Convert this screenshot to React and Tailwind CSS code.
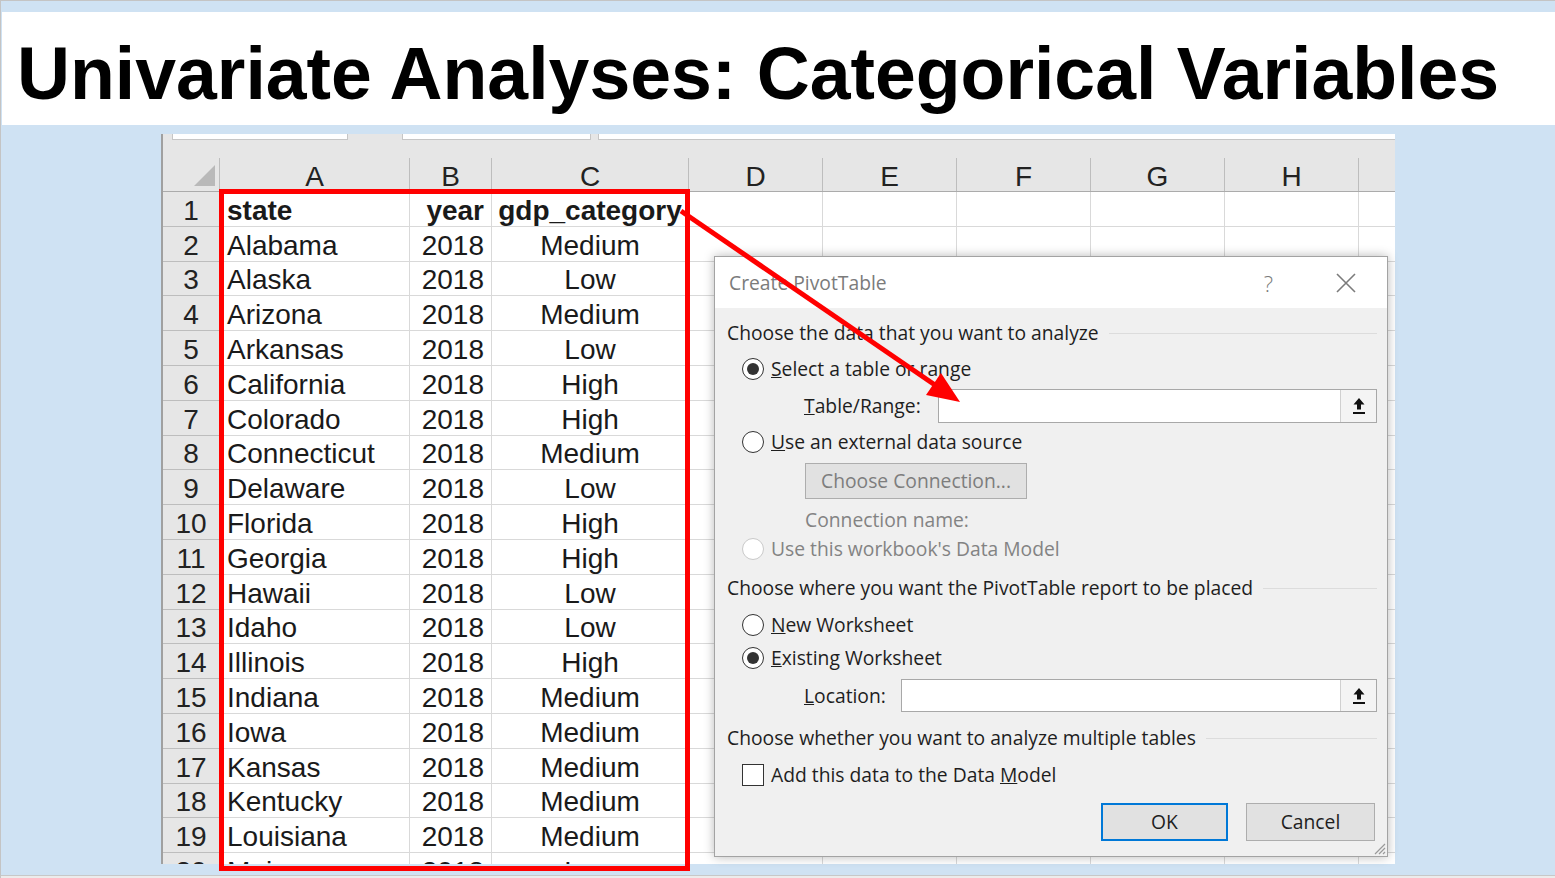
import React from "react";

const rows = [
  ["state", "year", "gdp_category"],
  ["Alabama", "2018", "Medium"],
  ["Alaska", "2018", "Low"],
  ["Arizona", "2018", "Medium"],
  ["Arkansas", "2018", "Low"],
  ["California", "2018", "High"],
  ["Colorado", "2018", "High"],
  ["Connecticut", "2018", "Medium"],
  ["Delaware", "2018", "Low"],
  ["Florida", "2018", "High"],
  ["Georgia", "2018", "High"],
  ["Hawaii", "2018", "Low"],
  ["Idaho", "2018", "Low"],
  ["Illinois", "2018", "High"],
  ["Indiana", "2018", "Medium"],
  ["Iowa", "2018", "Medium"],
  ["Kansas", "2018", "Medium"],
  ["Kentucky", "2018", "Medium"],
  ["Louisiana", "2018", "Medium"],
  ["Maine", "2018", "Low"],
];

const cols = ["A", "B", "C", "D", "E", "F", "G", "H"];

function Radio({ checked, disabled }) {
  if (disabled) {
    return <span className="w-[22px] h-[22px] rounded-full border-[1.5px] border-[#c9c9c9] bg-white shrink-0" />;
  }
  return (
    <span className="w-[22px] h-[22px] rounded-full border-[1.5px] border-[#333333] bg-white shrink-0 flex items-center justify-center">
      {checked ? <span className="w-[12px] h-[12px] rounded-full bg-[#333333]" /> : null}
    </span>
  );
}

function UpIcon() {
  return (
    <svg width="16" height="20" viewBox="0 0 16 20">
      <path d="M8 2 L2.5 8.5 H6 V13.5 H10 V8.5 H13.5 Z" fill="#111" />
      <rect x="2" y="16" width="12" height="2" fill="#111" />
    </svg>
  );
}

function RefGroup() {
  return (
    <div className="flex-1 h-full flex border border-[#a8a8a8] bg-white">
      <div className="flex-1" />
      <div className="w-[36px] h-full border-l border-[#d0d0d0] bg-[#f4f4f4] flex items-center justify-center">
        <UpIcon />
      </div>
    </div>
  );
}

function SectionHeader({ children, mt }) {
  return (
    <div className={`flex items-center h-[26px] shrink-0 ${mt}`}>
      <span className="whitespace-nowrap">{children}</span>
      <span className="flex-1 h-px bg-[#dcdcdc] ml-[10px]" />
    </div>
  );
}

export default function App() {
  return (
    <div className="relative w-[1555px] h-[878px] overflow-hidden bg-[#cfe2f3] border-t border-l border-[#c4c4c4] flex flex-col">
      {/* Title band */}
      <div className="shrink-0 mt-[11px] ml-[1px] h-[113px] bg-white pt-[26px] pl-[15px]">
        <h1 className="font-['Liberation_Sans',Arial,sans-serif] font-bold text-[73.4px] leading-none text-black whitespace-nowrap">
          Univariate Analyses: Categorical Variables
        </h1>
      </div>

      {/* Excel screenshot */}
      <div className="shrink-0 ml-[160px] mt-[9px] w-[1234px] h-[730px] overflow-hidden bg-[#e6e6e6] border-l-2 border-[#a0a0a0] flex flex-col font-['Liberation_Sans',Arial,sans-serif] text-[28px] leading-none text-[#1a1a1a]">
        {/* formula bar remnants */}
        <div className="shrink-0 h-[24px] flex items-start">
          <div className="ml-[9px] w-[176px] h-[6px] bg-white border-x border-b border-[#c6c6c6]" />
          <div className="ml-[54px] w-[189px] h-[6px] bg-white border-x border-b border-[#c6c6c6]" />
          <div className="ml-[7px] flex-1 h-[6px] bg-white border-l border-b border-[#c6c6c6]" />
        </div>
        {/* column header row */}
        <div className="shrink-0 grid grid-cols-[57px_190px_82px_197px_134px_134px_134px_134px_134px_36px] h-[34px] border-b border-[#ababab]">
          <div className="border-r border-[#bdbdbd] flex items-end justify-end pr-[4px] pb-[5px]">
            <svg width="21" height="21" viewBox="0 0 21 21">
              <path d="M21 0 L21 21 L0 21 Z" fill="#b9b9b9" />
            </svg>
          </div>
          {cols.map((c) => (
            <div key={c} className="border-r border-[#bdbdbd] flex items-center justify-center pt-[4px] text-[#222]">
              {c}
            </div>
          ))}
          <div />
        </div>
        {/* data rows */}
        {rows.map((r, i) => (
          <div key={i} className="grid grid-cols-[57px_190px_82px_197px_134px_134px_134px_134px_134px_36px] grid-rows-[34.8px] h-[34.8px] shrink-0">
            <div className="bg-[#e6e6e6] border-r border-b border-[#bdbdbd] flex items-center justify-center pt-[4px] text-[#222]">
              {i + 1}
            </div>
            <div className={i === 0 ? "bg-white border-r border-b border-[#d9d9d9] flex items-center pl-[7px] pt-[4px] font-bold whitespace-nowrap" : "bg-white border-r border-b border-[#d9d9d9] flex items-center pl-[7px] pt-[4px] whitespace-nowrap"}>
              {r[0]}
            </div>
            <div className={i === 0 ? "bg-white border-r border-b border-[#d9d9d9] flex items-center justify-end pr-[7px] pt-[4px] font-bold" : "bg-white border-r border-b border-[#d9d9d9] flex items-center justify-end pr-[7px] pt-[4px]"}>
              {r[1]}
            </div>
            <div className={i === 0 ? "bg-white border-r border-b border-[#d9d9d9] flex items-center justify-center pt-[4px] font-bold whitespace-nowrap" : "bg-white border-r border-b border-[#d9d9d9] flex items-center justify-center pt-[4px]"}>
              {r[2]}
            </div>
            <div className="bg-white border-r border-b border-[#d9d9d9]" />
            <div className="bg-white border-r border-b border-[#d9d9d9]" />
            <div className="bg-white border-r border-b border-[#d9d9d9]" />
            <div className="bg-white border-r border-b border-[#d9d9d9]" />
            <div className="bg-white border-r border-b border-[#d9d9d9]" />
            <div className="bg-white border-b border-[#d9d9d9]" />
          </div>
        ))}
      </div>

      {/* bottom strip */}
      <div className="mt-auto shrink-0 h-[3px] border-t border-[#c8c8c8] bg-[#ececec]" />

      {/* Create PivotTable dialog */}
      <div className="absolute left-[713px] top-[255px] w-[674px] h-[601px] border border-[#a3a3a3] bg-[#f0f0f0] shadow-[0_0_10px_rgba(0,0,0,0.28)] flex flex-col font-['Open_Sans',sans-serif] text-[19.3px] text-[#1e1e1e] leading-none">
        <div className="shrink-0 h-[51px] bg-white flex items-center pl-[14px] pr-[30px] text-[#7b7b7b]">
          <span>Create PivotTable</span>
          <span className="ml-auto font-light text-[22px] text-[#7b7b7b]">?</span>
          <svg className="ml-[62px]" width="22" height="22" viewBox="0 0 22 22">
            <path d="M2 2 L20 20 M20 2 L2 20" stroke="#7b7b7b" strokeWidth="1.6" />
          </svg>
        </div>
        <div className="flex-1 flex flex-col pl-[12px] pr-[10px] relative">
          <SectionHeader mt="mt-[12px]">Choose the data that you want to analyze</SectionHeader>
          <div className="shrink-0 flex items-center h-[26px] mt-[10px] ml-[15px] gap-[7px]">
            <Radio checked />
            <span><span className="underline">S</span>elect a table or range</span>
          </div>
          <div className="shrink-0 flex items-center h-[34px] mt-[7px] ml-[77px]">
            <div className="w-[134px]"><span className="underline">T</span>able/Range:</div>
            <RefGroup />
          </div>
          <div className="shrink-0 flex items-center h-[26px] mt-[6px] ml-[15px] gap-[7px]">
            <Radio />
            <span><span className="underline">U</span>se an external data source</span>
          </div>
          <div className="shrink-0 mt-[8px] ml-[78px] w-[222px] h-[36px] bg-[#e1e1e1] border border-[#adadad] flex items-center justify-center text-[#7d7d7d]">
            Choose Connection...
          </div>
          <div className="shrink-0 flex items-center h-[26px] mt-[8px] ml-[78px] text-[#838383]">Connection name:</div>
          <div className="shrink-0 flex items-center h-[26px] mt-[3px] ml-[15px] gap-[7px] text-[#838383]">
            <Radio disabled />
            <span>Use this workbook's Data Model</span>
          </div>
          <SectionHeader mt="mt-[13px]">Choose where you want the PivotTable report to be placed</SectionHeader>
          <div className="shrink-0 flex items-center h-[26px] mt-[11px] ml-[15px] gap-[7px]">
            <Radio />
            <span><span className="underline">N</span>ew Worksheet</span>
          </div>
          <div className="shrink-0 flex items-center h-[26px] mt-[7px] ml-[15px] gap-[7px]">
            <Radio checked />
            <span><span className="underline">E</span>xisting Worksheet</span>
          </div>
          <div className="shrink-0 flex items-center h-[33px] mt-[8px] ml-[77px]">
            <div className="w-[97px]"><span className="underline">L</span>ocation:</div>
            <RefGroup />
          </div>
          <SectionHeader mt="mt-[13px]">Choose whether you want to analyze multiple tables</SectionHeader>
          <div className="shrink-0 flex items-center h-[26px] mt-[11px] ml-[15px] gap-[7px]">
            <span className="w-[22px] h-[22px] border-[1.5px] border-[#333333] bg-white shrink-0" />
            <span>Add this data to the Data <span className="underline">M</span>odel</span>
          </div>
          <div className="shrink-0 flex justify-end gap-[18px] mt-[15px] mr-[2px]">
            <div className="w-[127px] h-[38px] border-2 border-[#0078d7] bg-[#e1e1e1] flex items-center justify-center">OK</div>
            <div className="w-[129px] h-[38px] border border-[#adadad] bg-[#e1e1e1] flex items-center justify-center">Cancel</div>
          </div>
          <svg className="absolute right-[1px] bottom-[1px]" width="13" height="13" viewBox="0 0 13 13">
            <path d="M12 2 L2 12 M12 6 L6 12 M12 10 L10 12" stroke="#9a9a9a" strokeWidth="1.2" />
          </svg>
        </div>
      </div>

      {/* red highlight rectangle */}
      <div className="absolute left-[218px] top-[188px] w-[471px] h-[682px] border-[5px] border-[#ff0000]" />

      {/* red arrow */}
      <svg className="absolute left-0 top-0 pointer-events-none" width="1555" height="878" viewBox="0 0 1555 878">
        <line x1="680" y1="210" x2="934" y2="384" stroke="#ff0000" strokeWidth="5" />
        <polygon points="959,401 925,394 940,372" fill="#ff0000" />
      </svg>
    </div>
  );
}
